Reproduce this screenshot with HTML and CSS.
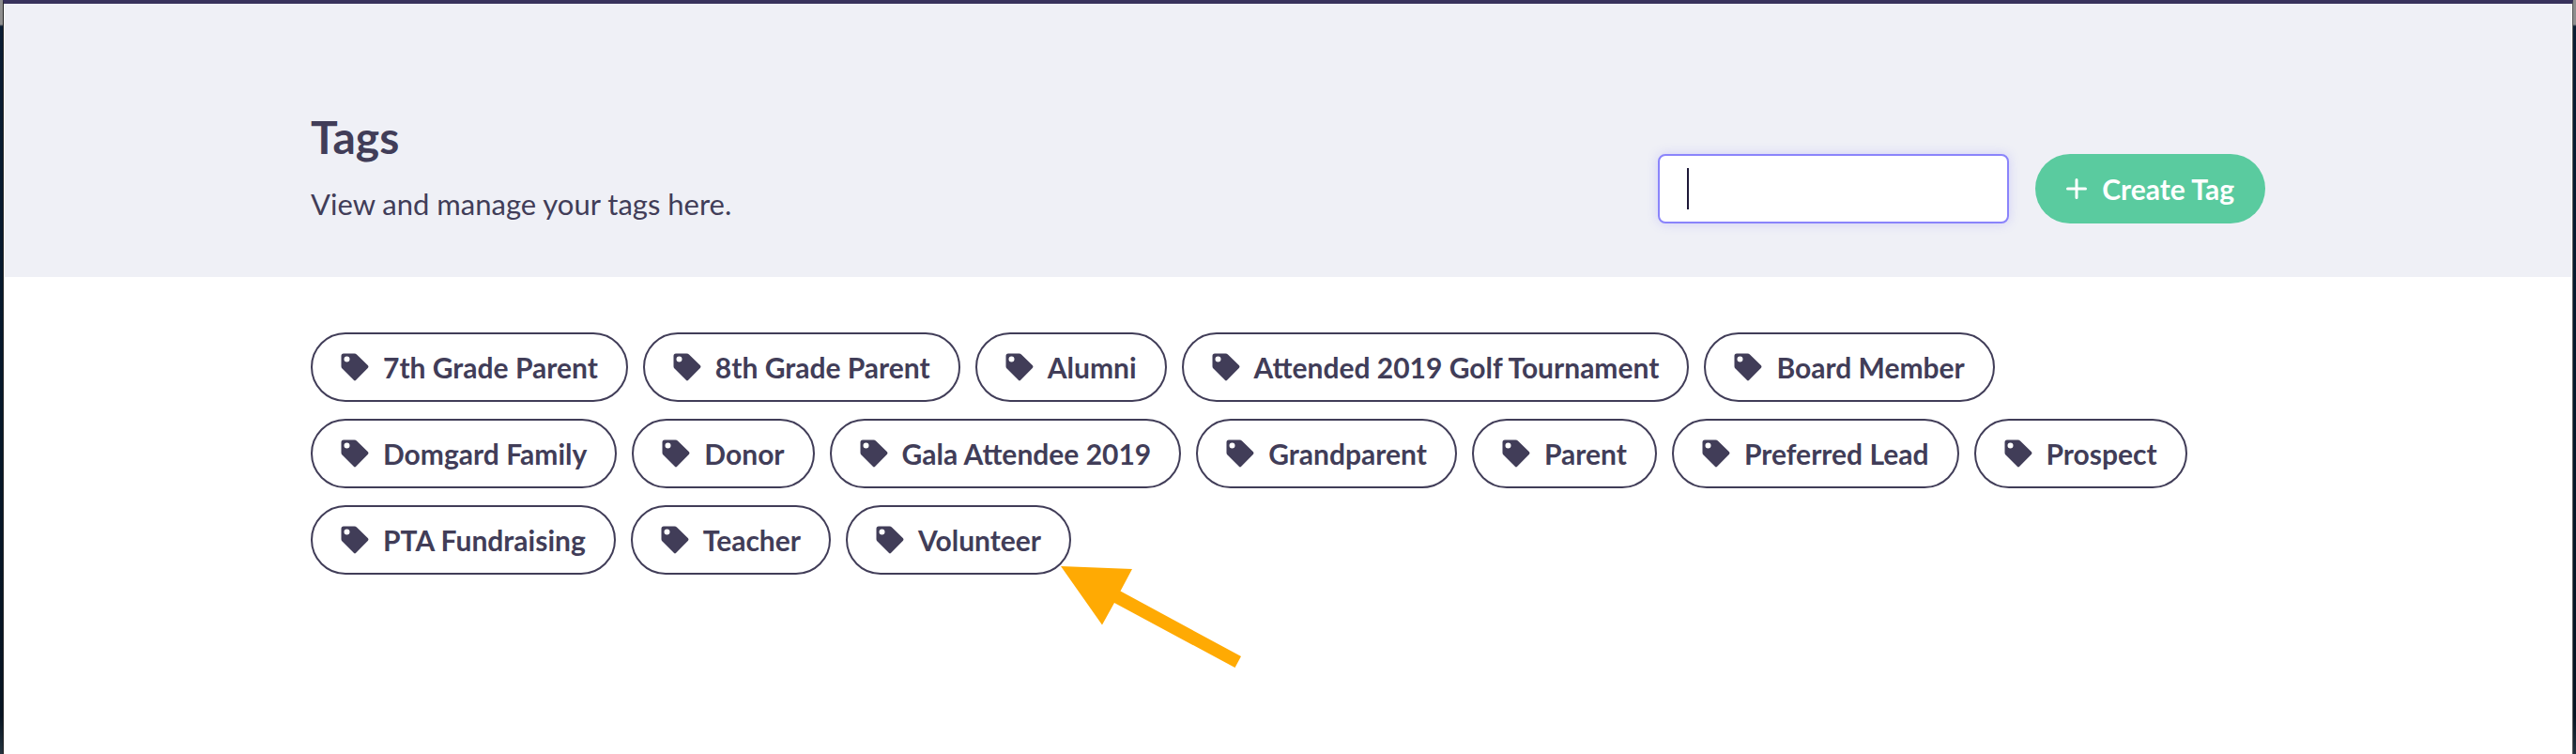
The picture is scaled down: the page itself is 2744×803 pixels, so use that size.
FILE: index.html
```
<!DOCTYPE html>
<html lang="en">
<head>
  <meta charset="UTF-8">
  <meta name="viewport" content="width=device-width, initial-scale=1.0">
  <title>Tags</title>
  <link rel="stylesheet" href="styles.css">
</head>
<body>

<!-- Tag icon, shared by every pill -->
<svg class="sprite" aria-hidden="true">
  <symbol id="icon-tag" viewBox="0 0 30 30">
    <path fill-rule="evenodd" d="M3 0.500H14.500Q16 0.500 17.200 1.700L29 13.300Q30 14.500 29 15.700L16.200 28.800Q15 30 13.800 28.800L1.500 16.600Q0.500 15.600 0.500 14.200V3Q0.500 0.500 3 0.500ZM6.500 3.600A3 3 0 1 0 6.500 9.600A3 3 0 1 0 6.500 3.600Z"/>
  </symbol>
</svg>

<div class="window">
  <header class="page-header">
    <div class="container header-row">
      <div class="intro">
        <h1>Tags</h1>
        <p>View and manage your tags here.</p>
      </div>
      <form class="actions">
        <input type="text" class="tag-input" aria-label="Tag name">
        <button type="button" class="create-button">
          <svg class="plus" viewBox="0 0 22 22" aria-hidden="true"><path d="M11 1.500V20.500M1.500 11H20.500"/></svg>
          Create Tag
        </button>
      </form>
    </div>
  </header>

  <main class="container">
    <ul class="tag-list">
      <li><a class="tag" href="#"><svg class="tag-icon"><use href="#icon-tag"/></svg>7th Grade Parent</a></li>
      <li><a class="tag" href="#"><svg class="tag-icon"><use href="#icon-tag"/></svg>8th Grade Parent</a></li>
      <li><a class="tag" href="#"><svg class="tag-icon"><use href="#icon-tag"/></svg>Alumni</a></li>
      <li><a class="tag" href="#"><svg class="tag-icon"><use href="#icon-tag"/></svg>Attended 2019 Golf Tournament</a></li>
      <li><a class="tag" href="#"><svg class="tag-icon"><use href="#icon-tag"/></svg>Board Member</a></li>
      <li><a class="tag" href="#"><svg class="tag-icon"><use href="#icon-tag"/></svg>Domgard Family</a></li>
      <li><a class="tag" href="#"><svg class="tag-icon"><use href="#icon-tag"/></svg>Donor</a></li>
      <li><a class="tag" href="#"><svg class="tag-icon"><use href="#icon-tag"/></svg>Gala Attendee 2019</a></li>
      <li><a class="tag" href="#"><svg class="tag-icon"><use href="#icon-tag"/></svg>Grandparent</a></li>
      <li><a class="tag" href="#"><svg class="tag-icon"><use href="#icon-tag"/></svg>Parent</a></li>
      <li><a class="tag" href="#"><svg class="tag-icon"><use href="#icon-tag"/></svg>Preferred Lead</a></li>
      <li><a class="tag" href="#"><svg class="tag-icon"><use href="#icon-tag"/></svg>Prospect</a></li>
      <li><a class="tag" href="#"><svg class="tag-icon"><use href="#icon-tag"/></svg>PTA Fundraising</a></li>
      <li><a class="tag" href="#"><svg class="tag-icon"><use href="#icon-tag"/></svg>Teacher</a></li>
      <li class="pointed">
        <a class="tag" href="#"><svg class="tag-icon"><use href="#icon-tag"/></svg>Volunteer</a>
        <!-- Arrow pointing at the pill -->
        <svg class="arrow" viewBox="0 0 192 108" aria-hidden="true"><path d="M0 0L76 3L63.500 26.500L192 96L185.500 108L57 39L44 62.500Z"/></svg>
      </li>
    </ul>
  </main>
</div>

</body>
</html>
```
FILE: styles.css
```
* {
  box-sizing: border-box;
}

/* The desktop shows as a thin strip on both sides of the window */
body {
  margin: 0;
  padding: 0 3px;
  min-height: 100vh;
  background: linear-gradient(#8e8e8e 0, #8e8e8e 26px, #0a1d33 28px, #06182b 50%, #071422 95%, #24343f);
  font-family: Lato, "Open Sans", sans-serif;
  font-size: 30px;
  color: #413d58;
}

.sprite {
  display: none;
}

.window {
  min-height: 100vh;
  background-color: #fff;
  border-top: 4px solid #38325c;
  border-left: 1px solid #222;
  border-right: 1px solid #555;
}

.container {
  width: 90%;
  max-width: 2082px;
  margin: 0 auto;
}

/* Header */
.page-header {
  margin: 0 1px;
  padding: 112px 0 57px;
  background-color: #eff0f6;
}

.header-row {
  display: flex;
  justify-content: space-between;
  align-items: flex-end;
}

h1 {
  margin: 0 0 22px;
  font-size: 48px;
  line-height: 60px;
}

p {
  margin: 0 0 2px;
  font-size: 31px;
  line-height: 38px;
}

.actions {
  display: flex;
  gap: 28px;
}

.tag-input {
  width: 374px;
  height: 74px;
  padding: 0 30px;
  border: 2px solid #8a84fb;
  border-radius: 8px;
  outline: none;
  box-shadow: 0 0 12px rgba(138, 132, 251, 0.3);
  /* Text cursor */
  background: linear-gradient(#1d1838, #1d1838) 29px center / 2px 44px no-repeat #fff;
  font: inherit;
  color: inherit;
}

.create-button {
  display: flex;
  align-items: center;
  gap: 16px;
  height: 74px;
  padding: 0 33px;
  border: none;
  border-radius: 37px;
  background-color: #5acb9f;
  color: #fff;
  font: inherit;
  font-weight: 700;
  cursor: pointer;
}

.plus {
  width: 22px;
  height: 22px;
  fill: none;
  stroke: #fff;
  stroke-width: 3;
  stroke-linecap: round;
}

/* Tags */
.tag-list {
  display: flex;
  flex-wrap: wrap;
  gap: 18px 16px;
  margin: 0;
  padding: 59px 0;
  list-style: none;
}

.tag {
  display: flex;
  align-items: center;
  gap: 15px;
  height: 74px;
  padding: 0 30px;
  border: 2px solid #413d58;
  border-radius: 37px;
  color: inherit;
  font-weight: 700;
  text-decoration: none;
}

.tag-icon {
  width: 30px;
  height: 30px;
  fill: currentColor;
}

.pointed {
  position: relative;
}

.arrow {
  position: absolute;
  top: 65px;
  left: calc(100% - 11px);
  width: 192px;
  height: 108px;
  fill: #ffaa03;
}
```
